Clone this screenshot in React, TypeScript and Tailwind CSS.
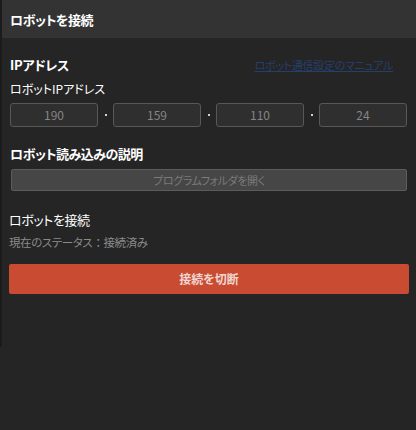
import * as React from 'react';

const octets = ['190', '159', '110', '24'];

export default function App() {
  return (
    <div
      className="w-[416px] h-[430px] bg-[#252525] flex text-white overflow-hidden [font-feature-settings:'palt']"
      style={{ fontFamily: '"Noto Sans CJK JP", "Noto Sans", sans-serif' }}
    >
      <div className="w-[2px] h-[347px] bg-[#1b1b1b] shrink-0" />
      <div className="flex-1 flex flex-col">
        {/* Header */}
        <div className="h-[38px] bg-[#333333] flex items-center pl-[8px]">
          <span className="text-[13px] font-bold leading-none tracking-[-0.5px]">ロボットを接続</span>
        </div>

        <div className="flex flex-col px-[7px] pt-[18px]">
          <div className="flex items-center justify-between pl-[1px] pr-[16px]">
            <span className="text-[13px] font-bold leading-[18px] tracking-[-0.3px]">IPアドレス</span>
            <a className="text-[11px] text-[#253f6b] underline leading-[16px] tracking-[-0.3px]">ロボット通信設定のマニュアル</a>
          </div>
          <span className="text-[12px] leading-[16px] mt-[7px] pl-[1px]">ロボットIPアドレス</span>

          {/* IP octets */}
          <div className="flex items-center mt-[6px] pl-[1px] pr-[2px]">
            {octets.map((o, i) => (
              <React.Fragment key={o}>
                {i > 0 && (
                  <div className="w-[15px] flex justify-center">
                    <div className="w-[2px] h-[2px] bg-[#d0d0d0]" />
                  </div>
                )}
                <div className="flex-1 h-[24px] border border-[#585858] rounded-[3px] bg-[#2f2f2f] flex items-center justify-center text-[12px] text-[#858585]">
                  {o}
                </div>
              </React.Fragment>
            ))}
          </div>

          <span className="text-[13px] font-bold leading-[18px] mt-[18px] pl-[1px] tracking-[-0.5px]">ロボット読み込みの説明</span>
          <div className="mt-[6px] ml-[2px] mr-[2px] h-[22px] bg-[#464646] border border-[#5c5c5c] rounded-[2px] flex items-center justify-center text-[11px] tracking-[-0.4px] text-[#7a7a7a]">
            プログラムフォルダを開く
          </div>

          <span className="text-[13px] leading-[18px] mt-[20px] tracking-[-0.4px]">ロボットを接続</span>
          <span className="text-[11.5px] text-[#8a8a8a] leading-[16px] mt-[5px] tracking-[-0.4px]">
            現在のステータス<span className="[font-feature-settings:normal]">：</span>接続済み
          </span>

          <div className="mt-[14px] h-[30px] bg-[#c84b32] rounded-[2px] flex items-center justify-center text-[12px] font-bold text-[#f0d6d0]">
            接続を切断
          </div>
        </div>
      </div>
    </div>
  );
}
